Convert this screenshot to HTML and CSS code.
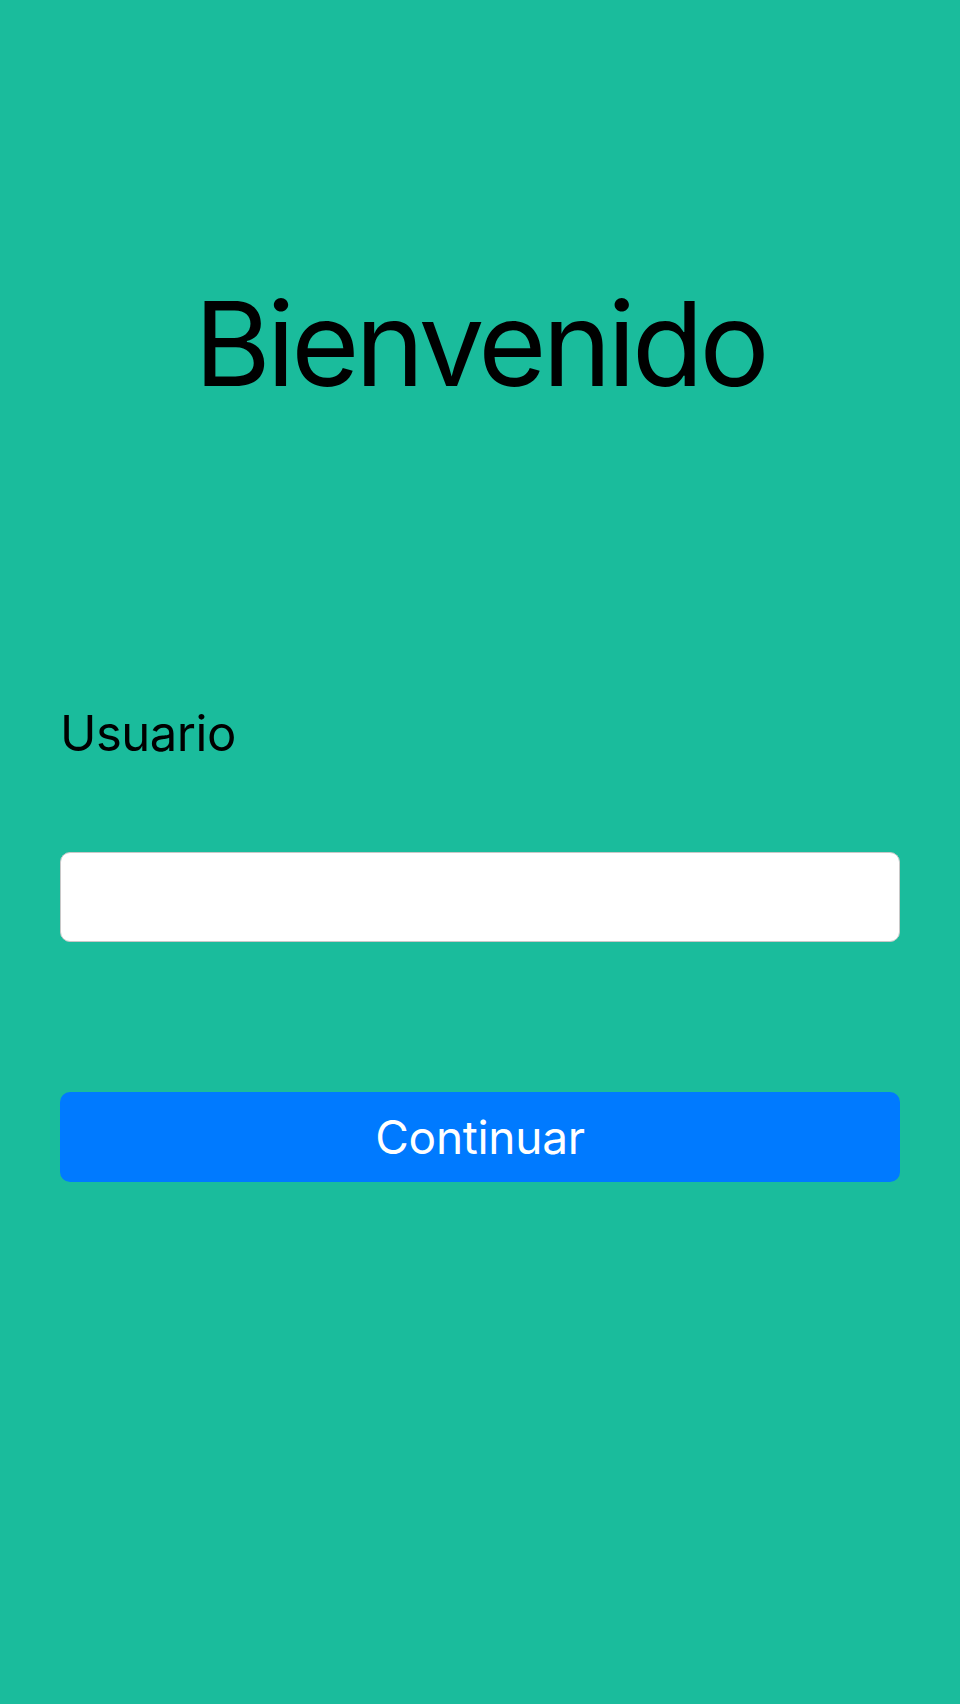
FILE: index.html
```html
<!DOCTYPE html>
<html lang="es">
<head>
<meta charset="utf-8">
<title>Bienvenido</title>
<link rel="stylesheet" href="styles.css">
</head>
<body>
<main class="screen">
  <h1 class="title">Bienvenido</h1>
  <form class="form">
    <label class="label" for="usuario">Usuario</label>
    <input class="input" id="usuario" type="text">
    <button class="button" type="button">Continuar</button>
  </form>
</main>
</body>
</html>
```

FILE: styles.css
```css
html, body {
  margin: 0;
  padding: 0;
  background: #1abc9c;
}
body {
  font-family: Inter, "Liberation Sans", Arial, sans-serif;
  color: #000;
  min-height: 1704px;
}
.screen {
  display: flex;
  flex-direction: column;
  padding: 285px 60px 0;
}
.title {
  margin: 0;
  font-weight: 400;
  font-size: 117px;
  line-height: 117px;
  letter-spacing: -4px;
  text-align: center;
}
.form {
  display: flex;
  flex-direction: column;
  margin-top: 307px;
}
.label {
  font-size: 49px;
  line-height: 50px;
  letter-spacing: -0.5px;
  display: block;
}
.input {
  margin-top: 93px;
  height: 90px;
  box-sizing: border-box;
  border: 1px solid #c8c8c8;
  border-radius: 10px;
  background: #fff;
  padding: 0 16px;
  font: inherit;
  font-size: 40px;
  outline: none;
}
.button {
  margin-top: 150px;
  height: 90px;
  border: none;
  border-radius: 10px;
  background: #007aff;
  color: #fff;
  font-family: inherit;
  font-size: 46px;
  letter-spacing: -0.3px;
  display: flex;
  align-items: center;
  justify-content: center;
  padding: 0;
}
```
